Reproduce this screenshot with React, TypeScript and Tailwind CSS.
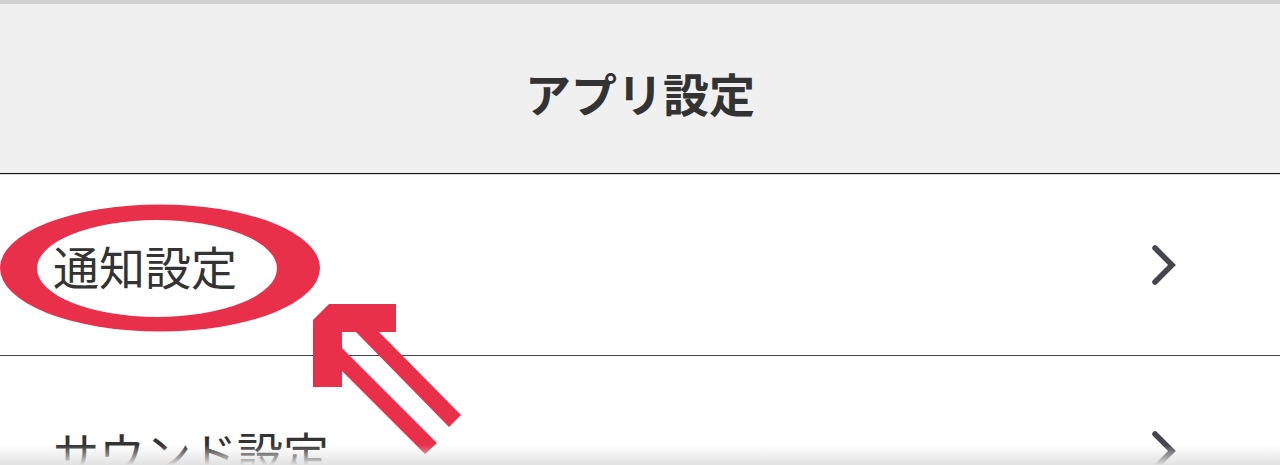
import React from 'react'

const rows = ['通知設定', 'サウンド設定']

function Chevron() {
  return (
    <svg width="28" height="44" viewBox="0 0 28 44" className="shrink-0">
      <polyline
        points="5,5 22,22 5,39"
        fill="none"
        stroke="#45454f"
        strokeWidth="5.5"
        strokeLinecap="round"
        strokeLinejoin="miter"
      />
    </svg>
  )
}

function Annotation() {
  const red = '#e8304a'
  return (
    <svg
      className="absolute left-0 top-0 pointer-events-none"
      width="1280"
      height="465"
      viewBox="0 0 1280 465"
    >
      {/* ring round the first row */}
      <path
        fillRule="evenodd"
        fill={red}
        d="M0,268 a160,63.5 0 1,0 320,0 a160,63.5 0 1,0 -320,0 Z M37,268.5 a120,48.5 0 1,0 240,0 a120,48.5 0 1,0 -240,0 Z"
      />
      {/* arrow */}
      <polygon fill={red} points="313,320 329,304 396,304 396,332 342,332 342,387 313,387" />
      <polygon fill={red} points="342,348 437,443 425,454 342,371" />
      <polygon fill={red} points="355,331 378,331 461,415 449,427" />
    </svg>
  )
}

export default function App() {
  return (
    <div
      className="relative w-[1280px] h-[465px] overflow-hidden bg-white text-[#333]"
      style={{ fontFamily: '"Noto Sans CJK JP", "Noto Sans", sans-serif' }}
    >
      <div className="h-[4px] bg-[#d2d2d2]" />
      <header className="h-[170px] bg-[#f0f0f0] flex items-center justify-center pt-[6px] border-b-[1.5px] border-[#111]">
        <h1 className="text-[46px] font-bold leading-none text-[#333]">アプリ設定</h1>
      </header>
      <div className="h-[1px] bg-[#dcdcdc]" />
      <ul>
        {rows.map((label, i) => (
          <li
            key={label}
            className={`flex items-center justify-between pl-[53px] pr-[102px] ${
              i === 0 ? 'h-[181px] border-b border-[#444]' : 'h-[180px] pt-[10px]'
            }`}
          >
            <span className="text-[46px] leading-none font-normal text-[#333]">{label}</span>
            <Chevron />
          </li>
        ))}
      </ul>
      <Annotation />
      <div className="absolute left-0 right-0 bottom-0 h-[20px] bg-gradient-to-b from-transparent to-[#e2e2e2]" />
    </div>
  )
}
